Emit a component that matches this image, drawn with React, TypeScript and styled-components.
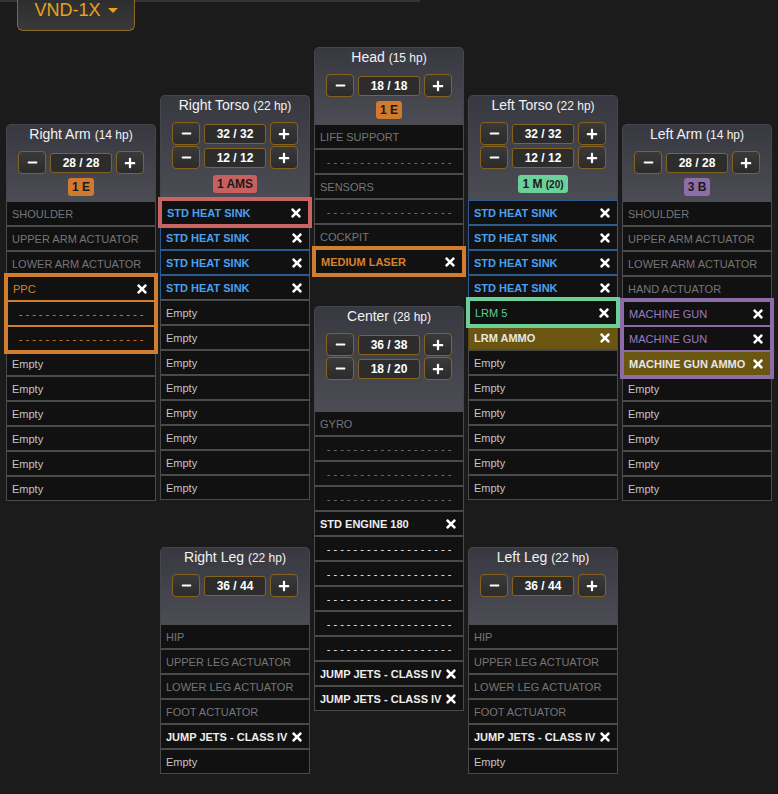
import React from 'react';
import styled, { createGlobalStyle } from 'styled-components';
import { FaMinus, FaPlus, FaTimes } from 'react-icons/fa';

const GlobalStyle = createGlobalStyle`
  html, body {
    margin: 0;
    padding: 0;
    background: #1b1b1b;
  }
  body {
    font-family: "Liberation Sans", Arial, sans-serif;
    color: #ddd;
  }
  * {
    box-sizing: border-box;
  }
`;

const Page = styled.div`
  position: relative;
  width: 778px;
  min-height: 794px;
  padding-left: 6px;

  &::before {
    content: '';
    position: absolute;
    left: 0;
    top: 0;
    width: 420px;
    height: 2px;
    background: #353535;
  }
`;

const Dropdown = styled.div`
  position: relative;
  margin-left: 11px;
  width: 118px;
  height: 31px;
  display: flex;
  align-items: flex-start;
  justify-content: center;
  gap: 7px;
  background: linear-gradient(to bottom, #2e2e2e, #393939);
  border: 1px solid #8a6a2a;
  border-top: none;
  border-radius: 0 0 6px 6px;
  color: #e9a11d;
  font-size: 18px;
  line-height: 21px;
`;

const Caret = styled.span`
  margin-top: 8px;
  width: 0;
  height: 0;
  border-left: 5px solid transparent;
  border-right: 5px solid transparent;
  border-top: 5px solid #e9a11d;
`;

const Doll = styled.div`
  display: flex;
  align-items: flex-start;
  gap: 4px;
  margin-top: 16px;
`;

const Column = styled.div<{ $offset: number; $gap: number }>`
  width: 150px;
  display: flex;
  flex-direction: column;
  padding-top: ${(p) => p.$offset}px;
  gap: ${(p) => p.$gap}px;
`;

const Panel = styled.div`
  display: flex;
  flex-direction: column;
`;

const Header = styled.div<{ $h: number }>`
  height: ${(p) => p.$h}px;
  display: flex;
  flex-direction: column;
  align-items: center;
  background: linear-gradient(to bottom, #383940, #4b4c54);
  border: 1px solid #45464d;
  border-bottom: none;
  border-radius: 5px 5px 0 0;
`;

const Title = styled.div`
  height: 26px;
  line-height: 19px;
  font-size: 14px;
  color: #f2f2f2;
  white-space: nowrap;
`;

const Hp = styled.span`
  font-size: 12px;
`;

const Steppers = styled.div`
  display: flex;
  flex-direction: column;
  gap: 1px;
`;

const Stepper = styled.div`
  display: flex;
  align-items: center;
  gap: 4px;
  height: 23px;
`;

const StepBtn = styled.div`
  width: 28px;
  height: 23px;
  display: flex;
  align-items: center;
  justify-content: center;
  border: 1px solid #86621f;
  border-radius: 4px;
  background: linear-gradient(to bottom, #3a3a3a, #2b2b2b);
  color: #fff;
`;

const Value = styled.div`
  width: 62px;
  height: 20px;
  display: flex;
  align-items: center;
  justify-content: center;
  border: 1px solid #86621f;
  border-radius: 3px;
  background: #2c2c2c;
  color: #fff;
  font-size: 12px;
  font-weight: bold;
`;

const BadgeArea = styled.div`
  flex: 1;
  display: flex;
  align-items: center;
  padding-bottom: 2px;
`;

const Badge = styled.div<{ $bg: string }>`
  height: 18px;
  line-height: 18px;
  padding: 0 4px;
  border-radius: 3px;
  background: ${(p) => p.$bg};
  color: #1b1b1b;
  font-size: 12px;
  font-weight: bold;
`;

const Small = styled.span`
  font-size: 10px;
`;

const Ring = styled.div<{ $c: string }>`
  position: relative;
  z-index: 1;
  margin: -3px -2px;
  border: 3px solid ${(p) => p.$c};
`;

const SlotRow = styled.div<{
  $border: string;
  $bg: string;
  $color: string;
  $bold: boolean;
  $center: boolean;
}>`
  height: 25px;
  display: flex;
  align-items: center;
  justify-content: ${(p) => (p.$center ? 'center' : 'space-between')};
  padding: 0 5px;
  border: 1px solid ${(p) => p.$border};
  background: ${(p) => p.$bg};
  color: ${(p) => p.$color};
  font-size: 11px;
  font-weight: ${(p) => (p.$bold ? 'bold' : 'normal')};
  white-space: nowrap;
  overflow: hidden;
`;

const Remove = styled.span`
  display: flex;
  color: #fff;
`;

type Tone = 'blue' | 'orange' | 'green' | 'purple' | 'white' | 'ammo' | 'gray';

const TONES: Record<Tone, { color: string; border: string; bg: string; bold: boolean }> = {
  blue: { color: '#4aa0f0', border: '#2d5a8e', bg: '#111', bold: true },
  orange: { color: '#d7812f', border: '#4a4a4a', bg: '#111', bold: true },
  green: { color: '#5ccf90', border: '#4a4a4a', bg: '#111', bold: false },
  purple: { color: '#9a7cc0', border: '#4a4a4a', bg: '#111', bold: false },
  white: { color: '#eeeeee', border: '#4a4a4a', bg: '#111', bold: true },
  ammo: { color: '#e6e6e6', border: '#5c4b12', bg: '#6b5611', bold: true },
  gray: { color: '#767676', border: '#4a4a4a', bg: '#111', bold: false },
};

type Slot =
  | { kind: 'fixed'; name: string }
  | { kind: 'empty' }
  | { kind: 'dash'; tone: Tone }
  | { kind: 'item'; name: string; tone: Tone; bold?: boolean };

type Entry = Slot | { kind: 'group'; ring: string; slots: Slot[] };

const DASHES = Array(19).fill('-').join(' ');

const SlotView = ({ slot, ring }: { slot: Slot; ring?: string }) => {
  if (slot.kind === 'empty') {
    return (
      <SlotRow $border={ring || '#4a4a4a'} $bg="#111" $color="#c4c4c4" $bold={false} $center={false}>
        Empty
      </SlotRow>
    );
  }
  if (slot.kind === 'fixed') {
    return (
      <SlotRow $border={ring || '#4a4a4a'} $bg="#111" $color="#767676" $bold={false} $center={false}>
        {slot.name}
      </SlotRow>
    );
  }
  const t = TONES[slot.tone];
  if (slot.kind === 'dash') {
    return (
      <SlotRow $border={ring || t.border} $bg={t.bg} $color={t.color} $bold={false} $center>
        {DASHES}
      </SlotRow>
    );
  }
  return (
    <SlotRow
      $border={ring || t.border}
      $bg={t.bg}
      $color={t.color}
      $bold={slot.bold ?? t.bold}
      $center={false}
    >
      <span>{slot.name}</span>
      <Remove>
        <FaTimes size={14} />
      </Remove>
    </SlotRow>
  );
};

interface LocationProps {
  name: string;
  hp: number;
  armor: string[];
  badge?: React.ReactNode;
  badgeBg?: string;
  height: number;
  entries: Entry[];
}

const Location = ({ name, hp, armor, badge, badgeBg, height, entries }: LocationProps) => (
  <Panel>
    <Header $h={height}>
      <Title>
        {name} <Hp>({hp} hp)</Hp>
      </Title>
      <Steppers>
        {armor.map((a, i) => (
          <Stepper key={i}>
            <StepBtn>
              <FaMinus size={11} />
            </StepBtn>
            <Value>{a}</Value>
            <StepBtn>
              <FaPlus size={12} />
            </StepBtn>
          </Stepper>
        ))}
      </Steppers>
      <BadgeArea>{badge && <Badge $bg={badgeBg || '#d07a30'}>{badge}</Badge>}</BadgeArea>
    </Header>
    {entries.map((e, i) =>
      e.kind === 'group' ? (
        <Ring key={i} $c={e.ring}>
          {e.slots.map((s, j) => (
            <SlotView key={j} slot={s} ring={e.ring} />
          ))}
        </Ring>
      ) : (
        <SlotView key={i} slot={e} />
      )
    )}
  </Panel>
);

const empties = (n: number): Slot[] => Array.from({ length: n }, () => ({ kind: 'empty' as const }));
const fixed = (name: string): Slot => ({ kind: 'fixed', name });

const ORANGE = '#d07d30';
const RED = '#c86464';
const GREEN = '#6dcf98';
const PURPLE = '#8c6ca6';

const heatSink: Slot = { kind: 'item', name: 'STD HEAT SINK', tone: 'blue' };
const jumpJet: Slot = { kind: 'item', name: 'JUMP JETS - CLASS IV', tone: 'white' };

const rightArm: Entry[] = [
  fixed('SHOULDER'),
  fixed('UPPER ARM ACTUATOR'),
  fixed('LOWER ARM ACTUATOR'),
  {
    kind: 'group',
    ring: ORANGE,
    slots: [
      { kind: 'item', name: 'PPC', tone: 'orange', bold: false },
      { kind: 'dash', tone: 'orange' },
      { kind: 'dash', tone: 'orange' },
    ],
  },
  ...empties(6),
];

const rightTorso: Entry[] = [
  { kind: 'group', ring: RED, slots: [heatSink] },
  heatSink,
  heatSink,
  heatSink,
  ...empties(8),
];

const head: Entry[] = [
  fixed('LIFE SUPPORT'),
  { kind: 'dash', tone: 'gray' },
  fixed('SENSORS'),
  { kind: 'dash', tone: 'gray' },
  fixed('COCKPIT'),
  { kind: 'group', ring: ORANGE, slots: [{ kind: 'item', name: 'MEDIUM LASER', tone: 'orange' }] },
];

const center: Entry[] = [
  fixed('GYRO'),
  { kind: 'dash', tone: 'gray' },
  { kind: 'dash', tone: 'gray' },
  { kind: 'dash', tone: 'gray' },
  { kind: 'item', name: 'STD ENGINE 180', tone: 'white' },
  { kind: 'dash', tone: 'white' },
  { kind: 'dash', tone: 'white' },
  { kind: 'dash', tone: 'white' },
  { kind: 'dash', tone: 'white' },
  { kind: 'dash', tone: 'white' },
  jumpJet,
  jumpJet,
];

const leftTorso: Entry[] = [
  heatSink,
  heatSink,
  heatSink,
  heatSink,
  { kind: 'group', ring: GREEN, slots: [{ kind: 'item', name: 'LRM 5', tone: 'green' }] },
  { kind: 'item', name: 'LRM AMMO', tone: 'ammo' },
  ...empties(6),
];

const leftArm: Entry[] = [
  fixed('SHOULDER'),
  fixed('UPPER ARM ACTUATOR'),
  fixed('LOWER ARM ACTUATOR'),
  fixed('HAND ACTUATOR'),
  {
    kind: 'group',
    ring: PURPLE,
    slots: [
      { kind: 'item', name: 'MACHINE GUN', tone: 'purple' },
      { kind: 'item', name: 'MACHINE GUN', tone: 'purple' },
      { kind: 'item', name: 'MACHINE GUN AMMO', tone: 'ammo' },
    ],
  },
  ...empties(5),
];

const leg: Entry[] = [
  fixed('HIP'),
  fixed('UPPER LEG ACTUATOR'),
  fixed('LOWER LEG ACTUATOR'),
  fixed('FOOT ACTUATOR'),
  jumpJet,
  ...empties(1),
];

export default function App() {
  return (
    <>
      <GlobalStyle />
      <Page>
        <Dropdown>
          VND-1X <Caret />
        </Dropdown>
        <Doll>
          <Column $offset={77} $gap={0}>
            <Location name="Right Arm" hp={14} armor={['28 / 28']} badge="1 E" height={77} entries={rightArm} />
          </Column>
          <Column $offset={48} $gap={47}>
            <Location
              name="Right Torso"
              hp={22}
              armor={['32 / 32', '12 / 12']}
              badge="1 AMS"
              badgeBg="#c86060"
              height={105}
              entries={rightTorso}
            />
            <Location name="Right Leg" hp={22} armor={['36 / 44']} height={77} entries={leg} />
          </Column>
          <Column $offset={0} $gap={32}>
            <Location name="Head" hp={15} armor={['18 / 18']} badge="1 E" height={77} entries={head} />
            <Location name="Center" hp={28} armor={['36 / 38', '18 / 20']} height={105} entries={center} />
          </Column>
          <Column $offset={48} $gap={47}>
            <Location
              name="Left Torso"
              hp={22}
              armor={['32 / 32', '12 / 12']}
              badge={
                <>
                  1 M <Small>(20)</Small>
                </>
              }
              badgeBg="#6dd09a"
              height={105}
              entries={leftTorso}
            />
            <Location name="Left Leg" hp={22} armor={['36 / 44']} height={77} entries={leg} />
          </Column>
          <Column $offset={77} $gap={0}>
            <Location
              name="Left Arm"
              hp={14}
              armor={['28 / 28']}
              badge="3 B"
              badgeBg="#8e6ea8"
              height={77}
              entries={leftArm}
            />
          </Column>
        </Doll>
      </Page>
    </>
  );
}
